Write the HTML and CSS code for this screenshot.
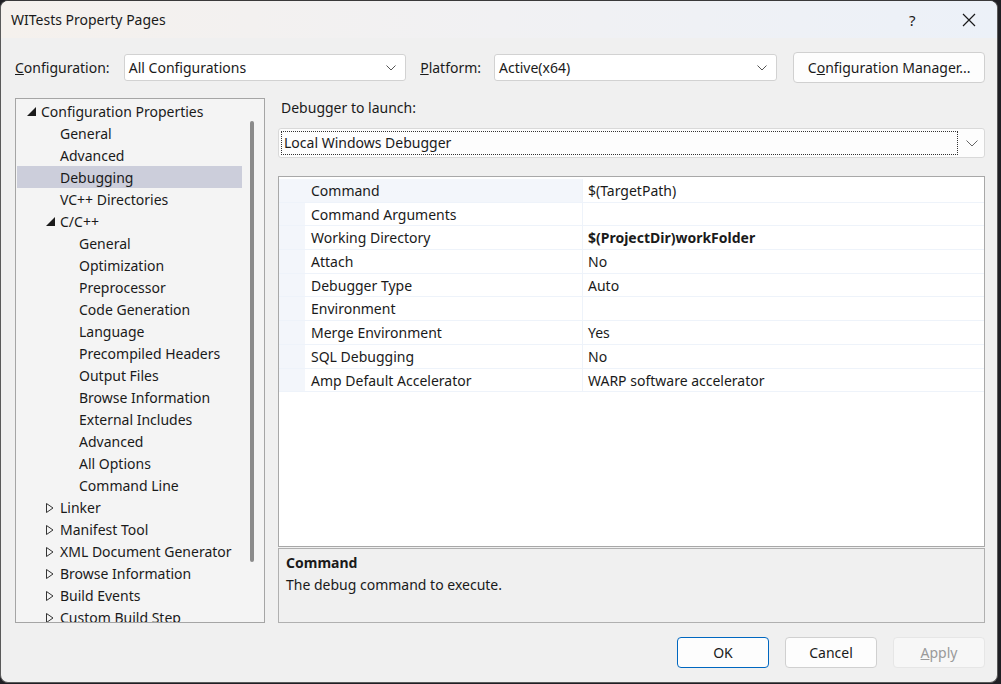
FILE: index.html
```html
<!DOCTYPE html>
<html>
<head>
<meta charset="utf-8">
<link rel="stylesheet" href="styles.css">
</head>
<body>
<div class="window">
  <div class="titlebar">
    <span class="title">WITests Property Pages</span>
    <span class="help">?</span>
    <span class="close"><svg width="14" height="14" viewBox="0 0 14 14"><path d="M1 1 L13 13 M13 1 L1 13" stroke="#1a1a1a" stroke-width="1.2" fill="none"/></svg></span>
  </div>
  <div class="content">
    <div class="toprow">
      <span class="lbl"><u>C</u>onfiguration:</span>
      <div class="select sel-config"><span>All Configurations</span><svg class="chev" width="10" height="6" viewBox="0 0 10 6"><path d="M0.5 0.5 L5 5 L9.5 0.5" stroke="#555" stroke-width="1" fill="none"/></svg></div>
      <span class="lbl lbl-plat"><u>P</u>latform:</span>
      <div class="select sel-plat"><span>Active(x64)</span><svg class="chev" width="10" height="6" viewBox="0 0 10 6"><path d="M0.5 0.5 L5 5 L9.5 0.5" stroke="#555" stroke-width="1" fill="none"/></svg></div>
      <div class="btn btn-cm">C<u>o</u>nfiguration Manager...</div>
    </div>
    <div class="main">
      <div class="tree">
        <div class="tree-list">
          <div class="ti l0"><span class="tw"><svg width="9" height="9" viewBox="0 0 9 9"><path d="M9 0 L9 9 L0 9 Z" fill="#1a1a1a"/></svg></span>Configuration Properties</div>
          <div class="ti l1">General</div>
          <div class="ti l1">Advanced</div>
          <div class="ti l1 sel">Debugging</div>
          <div class="ti l1">VC++ Directories</div>
          <div class="ti l1t"><span class="tw"><svg width="9" height="9" viewBox="0 0 9 9"><path d="M9 0 L9 9 L0 9 Z" fill="#1a1a1a"/></svg></span>C/C++</div>
          <div class="ti l2">General</div>
          <div class="ti l2">Optimization</div>
          <div class="ti l2">Preprocessor</div>
          <div class="ti l2">Code Generation</div>
          <div class="ti l2">Language</div>
          <div class="ti l2">Precompiled Headers</div>
          <div class="ti l2">Output Files</div>
          <div class="ti l2">Browse Information</div>
          <div class="ti l2">External Includes</div>
          <div class="ti l2">Advanced</div>
          <div class="ti l2">All Options</div>
          <div class="ti l2">Command Line</div>
          <div class="ti l1t"><span class="tw col"><svg width="8" height="10" viewBox="0 0 8 10"><path d="M0.5 0.5 L7 5 L0.5 9.5 Z" stroke="#333" stroke-width="1" fill="none"/></svg></span>Linker</div>
          <div class="ti l1t"><span class="tw col"><svg width="8" height="10" viewBox="0 0 8 10"><path d="M0.5 0.5 L7 5 L0.5 9.5 Z" stroke="#333" stroke-width="1" fill="none"/></svg></span>Manifest Tool</div>
          <div class="ti l1t"><span class="tw col"><svg width="8" height="10" viewBox="0 0 8 10"><path d="M0.5 0.5 L7 5 L0.5 9.5 Z" stroke="#333" stroke-width="1" fill="none"/></svg></span>XML Document Generator</div>
          <div class="ti l1t"><span class="tw col"><svg width="8" height="10" viewBox="0 0 8 10"><path d="M0.5 0.5 L7 5 L0.5 9.5 Z" stroke="#333" stroke-width="1" fill="none"/></svg></span>Browse Information</div>
          <div class="ti l1t"><span class="tw col"><svg width="8" height="10" viewBox="0 0 8 10"><path d="M0.5 0.5 L7 5 L0.5 9.5 Z" stroke="#333" stroke-width="1" fill="none"/></svg></span>Build Events</div>
          <div class="ti l1t"><span class="tw col"><svg width="8" height="10" viewBox="0 0 8 10"><path d="M0.5 0.5 L7 5 L0.5 9.5 Z" stroke="#333" stroke-width="1" fill="none"/></svg></span>Custom Build Step</div>
        </div>
        <div class="scroll"><div class="thumb"></div></div>
      </div>
      <div class="right">
        <div class="dbg-label">Debugger to launch:</div>
        <div class="combo">
          <div class="combo-text"><span>Local Windows Debugger</span></div>
          <div class="combo-arrow"><svg width="12" height="7" viewBox="0 0 12 7"><path d="M0.5 0.5 L6 6 L11.5 0.5" stroke="#666" stroke-width="1" fill="none"/></svg></div>
        </div>
        <div class="grid">
          <div class="row first"><div class="gut"></div><div class="name">Command</div><div class="val">$(TargetPath)</div></div>
          <div class="row"><div class="gut"></div><div class="name">Command Arguments</div><div class="val"></div></div>
          <div class="row"><div class="gut"></div><div class="name">Working Directory</div><div class="val b">$(ProjectDir)workFolder</div></div>
          <div class="row"><div class="gut"></div><div class="name">Attach</div><div class="val">No</div></div>
          <div class="row"><div class="gut"></div><div class="name">Debugger Type</div><div class="val">Auto</div></div>
          <div class="row"><div class="gut"></div><div class="name">Environment</div><div class="val"></div></div>
          <div class="row"><div class="gut"></div><div class="name">Merge Environment</div><div class="val">Yes</div></div>
          <div class="row"><div class="gut"></div><div class="name">SQL Debugging</div><div class="val">No</div></div>
          <div class="row"><div class="gut"></div><div class="name">Amp Default Accelerator</div><div class="val">WARP software accelerator</div></div>
        </div>
        <div class="desc">
          <div class="desc-title">Command</div>
          <div class="desc-text">The debug command to execute.</div>
        </div>
      </div>
    </div>
    <div class="buttons">
      <div class="btn dlg ok">OK</div>
      <div class="btn dlg">Cancel</div>
      <div class="btn dlg disabled"><u>A</u>pply</div>
    </div>
  </div>
</div>
</body>
</html>
```

FILE: styles.css
```css
* { box-sizing: border-box; }
html, body { margin: 0; padding: 0; }
body {
  width: 1001px;
  height: 684px;
  background: #1f1f24;
  font-family: "Segoe UI", "Noto Sans", "Open Sans", sans-serif;
  font-size: 14px;
  color: #1a1a1a;
  overflow: hidden;
}
.window {
  width: 998px;
  height: 683px;
  background: #f0f0f0;
  border-radius: 8px;
  overflow: hidden;
  border: 1px solid #5a5a5a;
  border-top-color: #3a3a3a;
}
.titlebar {
  height: 37px;
  display: flex;
  align-items: center;
  background: linear-gradient(90deg, #f5f1ed 0%, #f1f1f3 50%, #ecf1f8 100%);
  padding-left: 10px;
}
.title { flex: 1; font-size: 14px; color: #1a1a1a; padding-bottom: 1px; }
.help { width: 14px; font-size: 15px; margin-right: 39px; color: #1a1a1a; }
.close { width: 14px; height: 14px; margin-right: 21px; display: flex; }
.content { padding: 14px 12px 0 14px; }
.toprow { display: flex; align-items: center; height: 30px; }
.lbl { width: 109px; }
.lbl-plat { width: 74px; margin-left: 14px; }
.select {
  height: 27px;
  background: #fff;
  border: 1px solid #d2d2d2;
  border-radius: 3px;
  display: flex;
  align-items: center;
  justify-content: space-between;
  padding: 0 9px 0 4px;
  font-size: 14px;
}
.sel-config { width: 283px; }
.sel-plat { width: 284px; }
.chev { margin-top: 1px; }
.btn {
  background: #fdfdfd;
  border: 1px solid #d0d0d0;
  border-radius: 4px;
  display: flex;
  align-items: center;
  justify-content: center;
}
.btn-cm { width: 192px; height: 31px; margin-left: 16px; }
.main { display: flex; margin-top: 16px; height: 525px; }
.tree {
  width: 250px;
  border: 1px solid #a5a5a5;
  background: #f4f4f4;
  display: flex;
  overflow: hidden;
  padding: 1px 0 0 1px;
}
.tree-list { width: 225px; }
.ti {
  height: 22px;
  line-height: 23px;
  white-space: nowrap;
  position: relative;
}
.l0 { padding-left: 24px; }
.l1 { padding-left: 43px; }
.l1t { padding-left: 43px; }
.l2 { padding-left: 62px; }
.ti.sel { background: #cccedb; }
.tw {
  position: absolute;
  top: 0;
  width: 12px;
  height: 22px;
  display: flex;
  align-items: center;
  justify-content: center;
  color: #1a1a1a;
}
.tw svg { margin-top: 1px; }
.l0 .tw { left: 8px; }
.l1t .tw { left: 27px; }
.scroll { flex: 1; position: relative; }
.thumb {
  position: absolute;
  left: 8px;
  top: 21px;
  width: 4px;
  height: 441px;
  background: #8b8b8b;
  border-radius: 2px;
}
.right { margin-left: 13px; width: 707px; display: flex; flex-direction: column; }
.dbg-label { height: 21px; line-height: 19px; padding-left: 3px; }
.combo {
  margin-top: 9px;
  height: 30px;
  display: flex;
  background: #fdfdfd;
  border: 1px solid #d9d9d9;
  border-radius: 3px;
}
.combo-text { flex: 1; padding: 2px; }
.combo-text span {
  display: block;
  height: 24px;
  line-height: 22px;
  border: 1px dotted #333;
  padding-left: 2px;
}
.combo-arrow { width: 24px; display: flex; align-items: center; justify-content: center; }
.grid {
  margin-top: 18px;
  height: 371px;
  background: #fff;
  border: 1px solid #a8a8a8;
  padding-top: 2px;
}
.row {
  display: flex;
  height: 23.7px;
  line-height: 23px;
  border-bottom: 1px solid #eef3fa;
}
.gut { width: 26px; background: #f3f6fb; }
.name { width: 277px; padding-left: 6px; white-space: nowrap; }
.val { flex: 1; padding-left: 5px; white-space: nowrap; border-left: 1px solid #eef3fa; }
.row.first .name { background: #f3f6fb; }
.val.b { font-weight: bold; }
.desc {
  margin-top: 1px;
  height: 75px;
  border: 1px solid #b0b0b0;
  background: #f0f0f0;
  padding: 3px 7px;
}
.desc-title { font-weight: bold; line-height: 22px; }
.desc-text { line-height: 22px; }
.buttons { display: flex; justify-content: flex-end; gap: 16px; margin-top: 14px; }
.btn.dlg { width: 92px; height: 31px; }
.btn.ok { border-color: #0067c0; }
.btn.disabled { color: #9a9a9a; background: #f7f7f7; border-color: #e6e6e6; }
```
